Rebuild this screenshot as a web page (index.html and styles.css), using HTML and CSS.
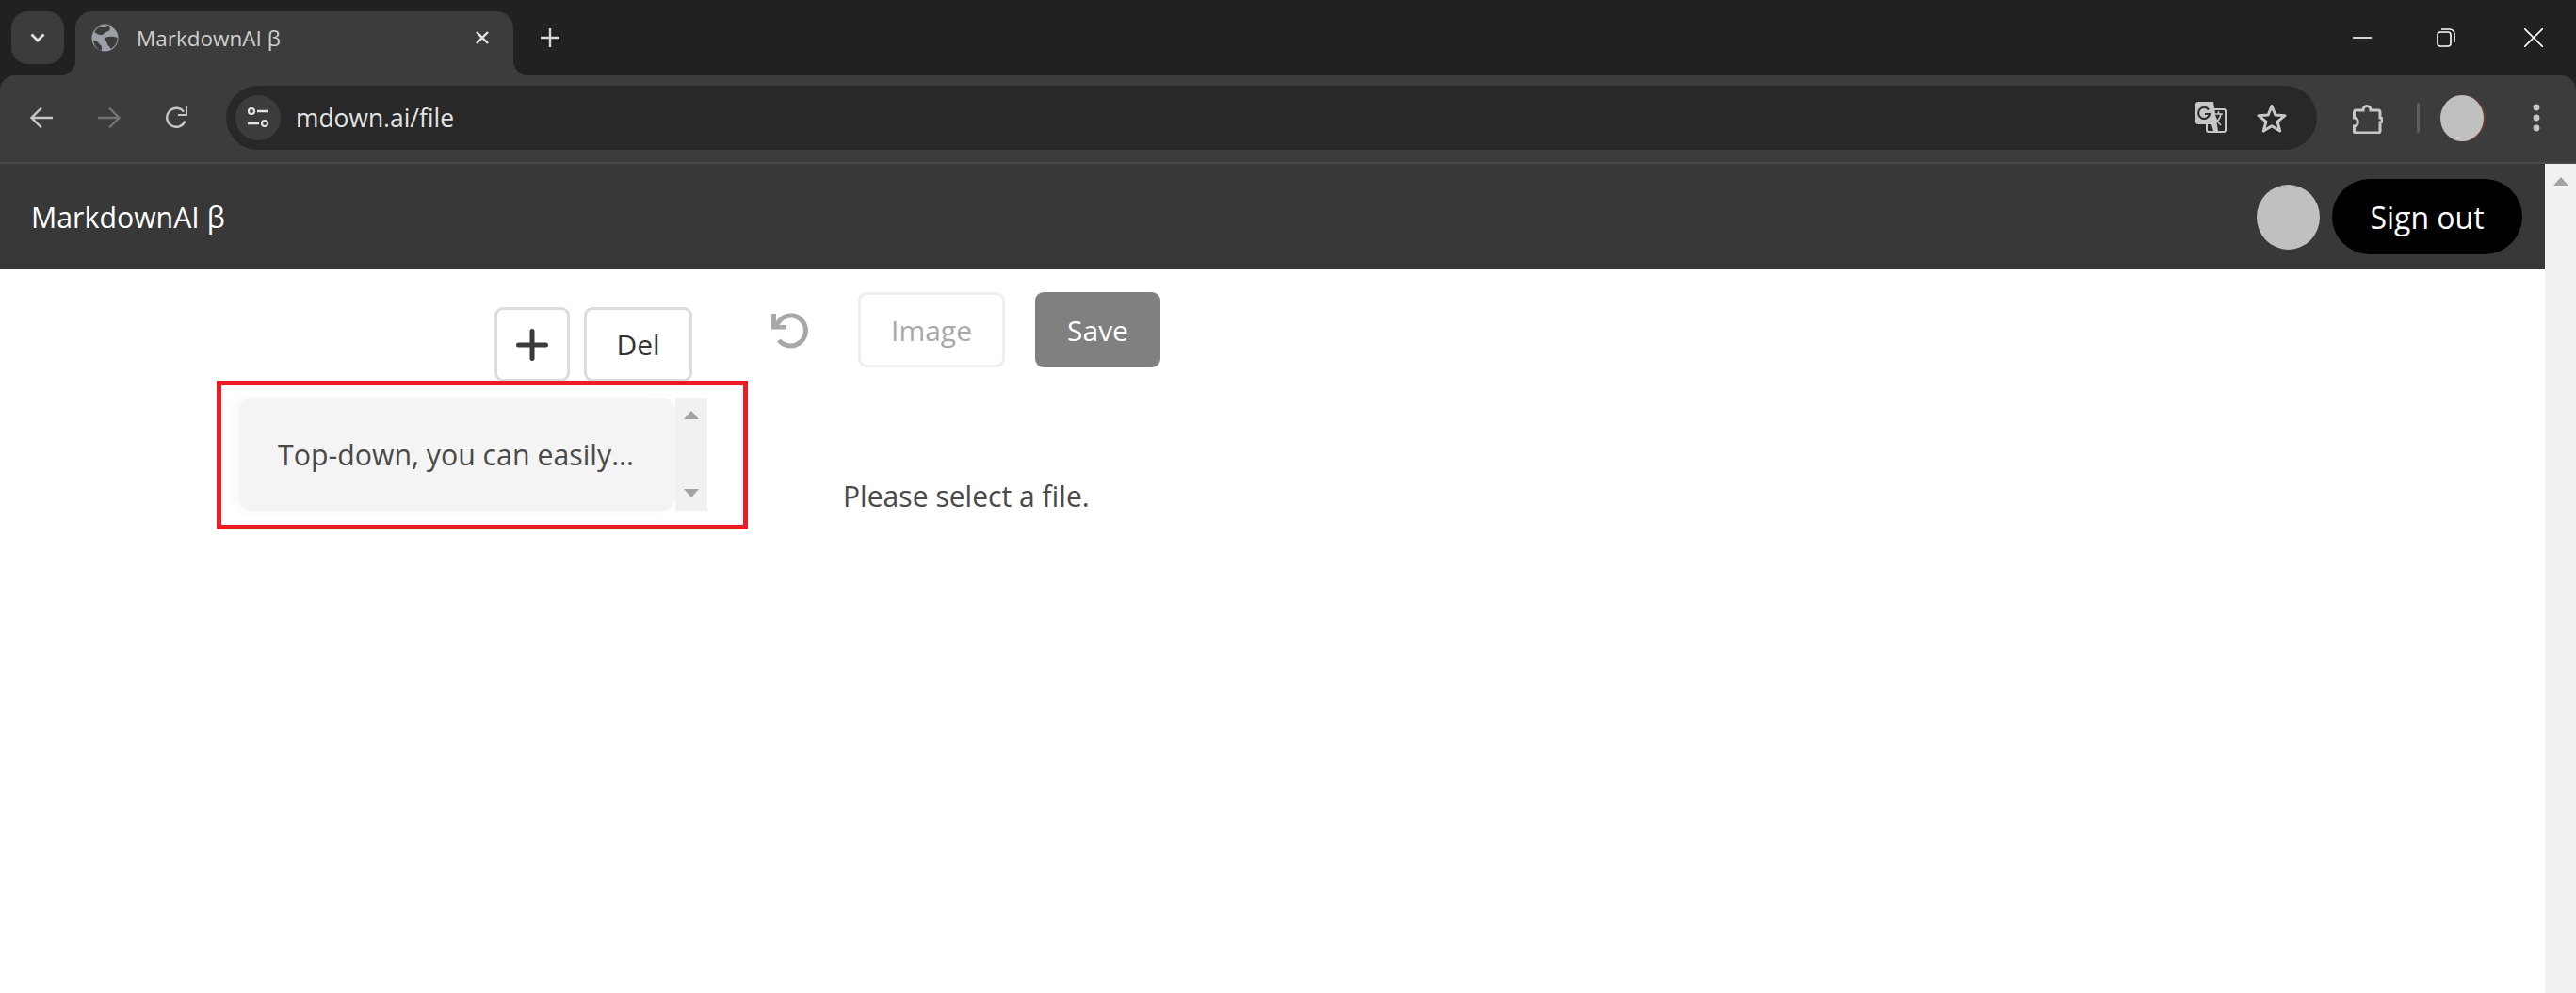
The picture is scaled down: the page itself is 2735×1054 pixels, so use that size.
FILE: index.html
```html
<!DOCTYPE html>
<html lang="en">
<head>
<meta charset="utf-8">
<title>MarkdownAI β</title>
<link rel="stylesheet" href="styles.css">
</head>
<body>
<div class="browser">
  <div class="tabstrip">
    <div class="tab-search"><svg width="18" height="12" viewBox="0 0 18 12"><path d="M2.500 2.500 9 9l6.500-6.500" fill="none" stroke="#e3e3e3" stroke-width="2.800"/></svg></div>
    <div class="tab">
      <svg class="favicon" width="29" height="29" viewBox="0 0 29 29"><circle cx="14.500" cy="14.500" r="14" fill="#9aa0a6"/><path d="M9 2.500c4 1 7 .5 9-1 3 2 2 5-1 6-3 .5-3 3-6 3.500S4 9 3.500 8C4.500 5.500 6.500 3.500 9 2.500ZM15 14c3-1.500 8-2 12.500 0 .5 5-3 10-7 12-.5-2.500-3-3-3.500-5.500S13 16 15 14ZM2 17c2 0 5 1 6 3s3 2 3 4 0 3-.5 4C6 26.500 3 22 2 17Z" fill="#3c3c3c"/></svg>
      <span class="tab-title">MarkdownAI β</span>
      <svg class="tab-close" width="16" height="16" viewBox="0 0 16 16"><path d="M2 2l12 12M14 2 2 14" stroke="#e3e3e3" stroke-width="2.400"/></svg>
    </div>
    <svg class="new-tab" width="20" height="20" viewBox="0 0 20 20"><path d="M10 0v20M0 10h20" stroke="#d5d5d5" stroke-width="2.400"/></svg>
    <div class="window-controls">
      <svg width="20" height="20" viewBox="0 0 20 20"><path d="M0 10h20" stroke="#fff" stroke-width="1.600"/></svg>
      <svg class="restore" width="20" height="20" viewBox="0 0 20 20"><rect x="1" y="4" width="14" height="15" rx="3" fill="none" stroke="#fff" stroke-width="1.600"/><path d="M5 1h9a5 5 0 0 1 5 5v9" fill="none" stroke="#fff" stroke-width="1.600"/></svg>
      <svg width="20" height="20" viewBox="0 0 20 20"><path d="M0 0l20 20M20 0 0 20" stroke="#fff" stroke-width="1.600"/></svg>
    </div>
  </div>
  <div class="toolbar">
    <svg class="nav-icon" width="26" height="24" viewBox="0 0 26 24"><path d="M25 12H3M13 1.500 2.500 12 13 22.500" fill="none" stroke="#c7c7c7" stroke-width="2.400"/></svg>
    <svg class="nav-icon" width="26" height="24" viewBox="0 0 26 24"><path d="M1 12h22M13 1.500 23.500 12 13 22.500" fill="none" stroke="#737373" stroke-width="2.400"/></svg>
    <svg class="nav-icon" width="26" height="24" viewBox="0 0 26 24"><path d="M21.500 15.500A10 10 0 1 1 20 5.500" fill="none" stroke="#c7c7c7" stroke-width="2.400"/><path d="M24 0v10H14V8h8V0Z" fill="#c7c7c7"/></svg>
    <div class="omnibox">
      <div class="site-info"><svg width="24" height="24" viewBox="0 0 24 24"><circle cx="5" cy="5" r="3" fill="none" stroke="#e3e3e3" stroke-width="2.200"/><path d="M11 5h12M1 18h12" stroke="#e3e3e3" stroke-width="2.400"/><circle cx="19" cy="18" r="3" fill="none" stroke="#e3e3e3" stroke-width="2.200"/></svg></div>
      <span class="url">mdown.ai/file</span>
      <svg class="translate" width="34" height="34" viewBox="0 0 34 34"><rect x="12" y="8" width="20" height="24" rx="2" fill="none" stroke="#c7c7c7" stroke-width="2"/><path d="M3 0h16l5 31-5 0-2-7H3a3 3 0 0 1-3-3V3a3 3 0 0 1 3-3Z" fill="#c7c7c7"/><path d="M14 8.500A6 6 0 1 0 15 13H10" fill="none" stroke="#303030" stroke-width="2.200"/><path d="M20 13h9M24.500 10v3M27 13c-1 6-5 9-8 10M21 16c1 4 4 7 6 9" fill="none" stroke="#c7c7c7" stroke-width="1.600"/></svg>
      <svg class="star" width="34" height="32" viewBox="0 0 34 32"><path d="M17 3.500 20.800 13l10.200.7-7.900 6.500 2.600 9.900L17 24.700l-8.700 5.400 2.600-9.900L3 13.700 13.200 13Z" fill="none" stroke="#c7c7c7" stroke-width="3" stroke-linejoin="round"/></svg>
    </div>
    <svg class="puzzle" width="32" height="34" viewBox="0 0 32 34"><path d="M3 9h8c0-6 8-6 8 0h8a2 2 0 0 1 2 2v6c3 0 3 5 0 5v9a2 2 0 0 1-2 2H3a1.500 1.500 0 0 1-1.500-2v-5c5 0 5-9 0-9V11A2 2 0 0 1 3 9Z" fill="none" stroke="#c7c7c7" stroke-width="3"/></svg>
    <span class="toolbar-divider"></span>
    <span class="profile"></span>
    <svg class="menu" width="8" height="30" viewBox="0 0 8 30"><circle cx="4" cy="4" r="3.400" fill="#c7c7c7"/><circle cx="4" cy="15" r="3.400" fill="#c7c7c7"/><circle cx="4" cy="26" r="3.400" fill="#c7c7c7"/></svg>
  </div>
  <div class="page">
    <div class="viewport">
      <header class="app-header">
        <div class="brand">MarkdownAI β</div>
        <div class="user"><span class="avatar"></span><button class="signout">Sign out</button></div>
      </header>
      <main class="workspace">
        <section class="files">
          <div class="file-actions">
            <button class="btn btn-add"><svg width="36" height="34" viewBox="0 0 36 34"><path d="M18 2.500v29M3.500 17h29" stroke="#3a3a3a" stroke-width="5" stroke-linecap="round"/></svg></button>
            <button class="btn btn-del">Del</button>
          </div>
          <div class="file-list">
            <div class="file-items"><div class="file-item">Top-down, you can easily...</div></div>
            <div class="mini-scroll">
              <span class="arrow-up"></span>
              <span class="arrow-down"></span>
            </div>
          </div>
        </section>
        <section class="editor">
          <div class="editor-actions">
            <svg class="undo" width="40" height="39" viewBox="0 0 40 39"><path d="M3 16 11 7A16 16 0 1 1 8 30" fill="none" stroke="#a8a8a8" stroke-width="5"/><path d="M0 2h5v12h11v4.500H0Z" fill="#a8a8a8"/></svg>
            <button class="btn btn-image">Image</button>
            <button class="btn btn-save">Save</button>
          </div>
          <p class="message">Please select a file.</p>
        </section>
      </main>
      <div class="annotation"></div>
    </div>
    <div class="scrollbar"><span class="arrow-up"></span></div>
  </div>
</div>
</body>
</html>
```
FILE: styles.css
```css
* { box-sizing: border-box; }
html, body { margin: 0; height: 100%; overflow: hidden; background: #fff; }
body { font-family: "Open Sans", "Noto Sans", sans-serif; }
.browser { height: 1054px; display: flex; flex-direction: column; background: #202222; }

.tabstrip { height: 80px; flex: none; background: #202222; display: flex; align-items: flex-start; padding: 12px 0 0 12px; }
.tab-search { width: 56px; height: 56px; border-radius: 18px; background: #3c3c3c; display: flex; align-items: center; justify-content: center; }
.tab { position: relative; width: 465px; height: 68px; margin-left: 12px; background: #3c3c3c; border-radius: 18px 18px 0 0; display: flex; align-items: center; padding: 0 25px 12px 17px; }
.tab::before, .tab::after { content: ""; position: absolute; bottom: 0; width: 16px; height: 16px; }
.tab::before { left: -16px; background: radial-gradient(circle at 0 0, transparent 16px, #3c3c3c 16.500px); }
.tab::after { right: -16px; background: radial-gradient(circle at 100% 0, transparent 16px, #3c3c3c 16.500px); }
.favicon { flex: none; }
.tab-title { margin-left: 19px; font: 22.500px "Open Sans", sans-serif; color: #d0d0d0; flex: 1; white-space: nowrap; }
.new-tab { margin: 18px 0 0 29px; flex: none; }
.window-controls { margin-left: auto; display: flex; gap: 71px; padding: 18px 35px 0 0; }
.window-controls svg { display: block; }
.window-controls .restore { margin-left: -2px; margin-right: 2px; }

.toolbar { height: 94px; flex: none; background: #3c3c3c; border-radius: 16px 16px 0 0; border-bottom: 2px solid #4a4a4a; display: flex; align-items: center; padding: 0 0 2px 31px; }
.nav-icon { flex: none; margin-right: 46px; }
.nav-icon:nth-of-type(3) { margin-right: 39px; }
.omnibox { width: 2220px; height: 68px; border-radius: 34px; background: #282828; display: flex; align-items: center; padding-left: 10px; flex: none; }
.site-info { width: 48px; height: 48px; border-radius: 50%; background: #3c3c3c; display: flex; align-items: center; justify-content: center; flex: none; }
.url { margin-left: 16px; font: 26.400px "Open Sans", sans-serif; color: #e3e3e3; }
.translate { margin-left: auto; flex: none; }
.star { margin: 0 31px 0 30px; flex: none; }
.puzzle { margin-left: 38px; flex: none; }
.toolbar-divider { width: 3px; height: 32px; background: #5e5e5e; border-radius: 2px; margin-left: 36px; flex: none; }
.profile { width: 46px; height: 49px; border-radius: 50%; background: #c0c0c0; margin-left: 22px; box-shadow: 2px 0 0 #6b3b30; flex: none; }
.menu { margin-left: 52px; flex: none; }

.page { flex: 1; display: flex; min-height: 0; background: #fff; }
.viewport { flex: 1; position: relative; min-width: 0; }
.scrollbar { width: 33px; background: #f1f1f1; flex: none; display: flex; justify-content: center; padding-top: 14px; }

.app-header { height: 112px; background: #383838; display: flex; align-items: center; justify-content: space-between; padding: 0 24px 0 33px; }
.brand { font-size: 30.300px; color: #fff; }
.user { display: flex; align-items: center; gap: 13px; }
.avatar { width: 67px; height: 69px; border-radius: 50%; background: #c0c0c0; }
.signout { width: 202px; height: 80px; border: 0; border-radius: 40px; background: #000; color: #fff; font: 32px "Open Sans", sans-serif; }

.workspace { display: flex; padding-left: 254px; }
.files { width: 497px; flex: none; }
.file-actions { display: flex; justify-content: flex-end; gap: 15px; padding: 40px 16px 0 0; }
.btn { height: 79px; border-radius: 9px; background: #fff; border: 3px solid #dcdcdc; font: 30px "Open Sans", sans-serif; color: #333; padding: 0; }
.btn-add { width: 80px; display: flex; align-items: center; justify-content: center; }
.btn-del { width: 115px; }
.file-list { margin-top: 17px; height: 120px; display: flex; }
.file-items { flex: 1; background: #fff; }
.file-item { height: 120px; background: #f4f4f4; border-radius: 14px; box-shadow: -6px 0 14px rgba(0, 0, 0, .03); font-size: 30.300px; color: #4a4a4a; display: flex; align-items: center; padding-left: 41px; white-space: nowrap; }
.mini-scroll { width: 34px; background: #f1f1f1; display: flex; flex-direction: column; align-items: center; justify-content: space-between; padding: 14px 0 14px; }
.arrow-up { width: 0; height: 0; border: 8.500px solid transparent; border-top: 0; border-bottom: 9px solid #a3a3a3; }
.arrow-down { width: 0; height: 0; border: 8.500px solid transparent; border-bottom: 0; border-top: 9px solid #a3a3a3; }

.editor { margin-left: 68px; padding-top: 24px; }
.editor-actions { display: flex; align-items: center; }
.undo { flex: none; }
.btn-image { width: 156px; height: 80px; margin-left: 52px; border-color: #eeeeee; color: #a8a8a8; }
.btn-save { width: 133px; height: 80px; margin-left: 32px; border: 0; background: #808080; color: #fff; }
.message { margin: 118px 0 0 76px; font-size: 30.100px; line-height: 38px; color: #4a4a4a; white-space: nowrap; }

.annotation { position: absolute; left: 230px; top: 230px; width: 564px; height: 158px; border: 5px solid #ed1c24; }
```
